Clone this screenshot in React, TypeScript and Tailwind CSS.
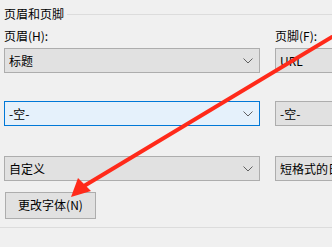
import React from "react";

function Chevron() {
  return (
    <svg width="10" height="6" viewBox="0 0 10 6" className="shrink-0">
      <path d="M0.5 0.5 L5 5 L9.5 0.5" fill="none" stroke="#606060" strokeWidth="1" />
    </svg>
  );
}

function Combo({ text, focused = false, chevron = true, wide = true }: { text: string; focused?: boolean; chevron?: boolean; wide?: boolean }) {
  return (
    <div
      className={`flex items-center h-[25px] pl-[4px] border ${
        focused ? "border-[#0078d7] bg-[#e5f1fb]" : "border-[#adadad] bg-[#e1e1e1]"
      } ${wide ? "w-[256px] pr-[6px]" : "w-[120px] shrink-0"}`}
    >
      <span className="flex-1 whitespace-nowrap overflow-hidden text-[12px] leading-[16px] text-black">{text}</span>
      {chevron && <Chevron />}
    </div>
  );
}

export default function App() {
  return (
    <div
      className="relative w-[332px] h-[247px] overflow-hidden bg-[#f0f0f0] text-black"
      style={{ fontFamily: '"Noto Sans CJK SC", "Noto Sans", sans-serif' }}
    >
      <div className="flex items-center pt-[6px] pl-[4px]">
        <span className="text-[12px] leading-[16px] whitespace-nowrap">页眉和页脚</span>
        <div className="flex-1 h-px bg-[#dcdcdc] ml-[3px]" />
      </div>
      <div className="flex gap-[15px] pl-[4px] pt-[6px]">
        <div className="w-[256px] shrink-0 flex flex-col">
          <span className="text-[12px] leading-[16px] whitespace-nowrap">页眉(H):</span>
          <div className="mt-[4px]">
            <Combo text="标题" />
          </div>
          <div className="mt-[28px]">
            <Combo text="-空-" focused />
          </div>
          <div className="mt-[30px]">
            <Combo text="自定义" />
          </div>
        </div>
        <div className="w-[120px] shrink-0 flex flex-col">
          <span className="text-[12px] leading-[16px] whitespace-nowrap">页脚(F):</span>
          <div className="mt-[4px] flex">
            <Combo text="URL" chevron={false} wide={false} />
          </div>
          <div className="mt-[28px] flex">
            <Combo text="-空-" chevron={false} wide={false} />
          </div>
          <div className="mt-[30px] flex">
            <Combo text="短格式的日期" chevron={false} wide={false} />
          </div>
        </div>
      </div>
      <div className="pl-[5px] pt-[10px]">
        <button className="w-[91px] h-[27px] border border-[#adadad] bg-[#e1e1e1] text-[12px] leading-[16px] text-black">
          更改字体(N)
        </button>
      </div>
      <div className="mt-[8px] h-px bg-[#dcdcdc]" />

      <svg className="absolute left-0 top-0 pointer-events-none" width="332" height="247" viewBox="0 0 332 247">
        <line x1="332" y1="37" x2="84" y2="186" stroke="#ff2a1a" strokeWidth="4" strokeLinecap="round" />
        <polygon points="71,197 78,178 91,191" fill="#ff2a1a" />
      </svg>
    </div>
  );
}
